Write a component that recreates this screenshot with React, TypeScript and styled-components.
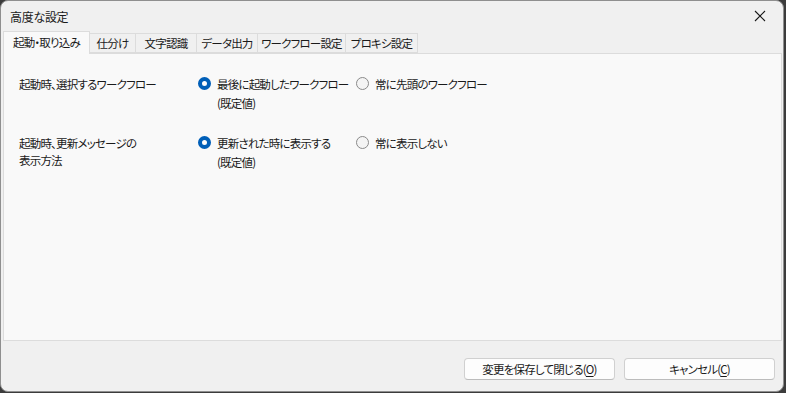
import React, { useState } from 'react';
import styled, { createGlobalStyle } from 'styled-components';

const GlobalStyle = createGlobalStyle`
  html, body {
    margin: 0;
    padding: 0;
    background: #3c3c3c;
  }
  body {
    font-family: 'Noto Sans CJK JP', 'Noto Sans', sans-serif;
    font-size: 11.5px;
    font-feature-settings: 'palt';
    letter-spacing: -0.8px;
    color: #1a1a1a;
  }
`;

// タブの幅は元の画面に合わせる
const tabs = [
  { label: '起動・取り込み', width: 86 },
  { label: '仕分け', width: 46 },
  { label: '文字認識', width: 61 },
  { label: 'データ出力', width: 61 },
  { label: 'ワークフロー設定', width: 88 },
  { label: 'プロキシ設定', width: 72 },
];

type Option = { label: string; note?: string };
type Setting = { title: string[]; options: Option[] };

const settings: Setting[] = [
  {
    title: ['起動時、選択するワークフロー'],
    options: [{ label: '最後に起動したワークフロー', note: '(既定値)' }, { label: '常に先頭のワークフロー' }],
  },
  {
    title: ['起動時、更新メッセージの', '表示方法'],
    options: [{ label: '更新された時に表示する', note: '(既定値)' }, { label: '常に表示しない' }],
  },
];

function App() {
  const [activeTab, setActiveTab] = useState(0);
  const [picked, setPicked] = useState<number[]>([0, 0]);

  const handlePick = (row: number, idx: number) => {
    // 選択したラジオの位置を保存
    const next = [...picked];
    next[row] = idx;
    setPicked(next);
  };

  return (
    <>
      <GlobalStyle />
      <S.Window>
        <S.TitleBar>
          <S.Title>高度な設定</S.Title>
          <S.CloseButton>
            <svg width='12' height='12' viewBox='0 0 12 12'>
              <path d='M1 1 L11 11 M11 1 L1 11' stroke='#1a1a1a' strokeWidth='1.1' fill='none' />
            </svg>
          </S.CloseButton>
        </S.TitleBar>
        <S.TabStrip>
          {tabs.map((t, i) => (
            <S.Tab key={t.label} $active={activeTab === i} $width={t.width} onClick={() => setActiveTab(i)}>
              {t.label}
            </S.Tab>
          ))}
        </S.TabStrip>
        <S.Panel>
          <S.SettingGrid>
            {settings.map((s, row) => (
              <React.Fragment key={row}>
                <S.SettingTitle>
                  {s.title.map((line) => (
                    <div key={line}>{line}</div>
                  ))}
                </S.SettingTitle>
                {s.options.map((o, idx) => (
                  <S.RadioOption key={o.label} onClick={() => handlePick(row, idx)}>
                    <S.RadioMark $checked={picked[row] === idx} />
                    <S.RadioText>
                      <div>{o.label}</div>
                      {o.note && <div>{o.note}</div>}
                    </S.RadioText>
                  </S.RadioOption>
                ))}
              </React.Fragment>
            ))}
          </S.SettingGrid>
        </S.Panel>
        <S.Footer>
          <S.Button>
            変更を保存して閉じる(<u>O</u>)
          </S.Button>
          <S.Button>
            キャンセル(<u>C</u>)
          </S.Button>
        </S.Footer>
      </S.Window>
    </>
  );
}

const S = {
  Window: styled.div`
    width: 784px;
    height: 392px;
    box-sizing: border-box;
    display: flex;
    flex-direction: column;
    background: #f0f0f0;
    border: 1px solid #8f8f8f;
    border-radius: 8px;
    overflow: hidden;
  `,
  TitleBar: styled.div`
    height: 30px;
    display: flex;
    align-items: center;
    justify-content: space-between;
    padding: 0 0 0 9px;
    color: #1a1a1a;
  `,
  Title: styled.span`
    font-size: 12px;
    letter-spacing: -0.3px;
  `,
  CloseButton: styled.div`
    width: 46px;
    height: 30px;
    display: flex;
    align-items: center;
    justify-content: center;
  `,
  TabStrip: styled.div`
    height: 22px;
    display: flex;
    align-items: flex-end;
    padding-left: 3px;
    position: relative;
    z-index: 1;
  `,
  Tab: styled.div<{ $active: boolean; $width: number }>`
    box-sizing: border-box;
    width: ${(p) => p.$width + 1}px;
    height: ${(p) => (p.$active ? '23px' : '20px')};
    margin-bottom: ${(p) => (p.$active ? '-1px' : '0')};
    padding: ${(p) => (p.$active ? '0 0 2px' : '0')};
    display: flex;
    align-items: center;
    justify-content: center;
    background: ${(p) => (p.$active ? '#f9f9f9' : '#f0f0f0')};
    border: 1px solid #dcdcdc;
    border-bottom: ${(p) => (p.$active ? 'none' : '1px solid #dcdcdc')};
    margin-left: -1px;
    white-space: nowrap;
    cursor: default;
  `,
  Panel: styled.div`
    flex: 1;
    margin: 0 1px 0 2px;
    background: #f9f9f9;
    border: 1px solid #dcdcdc;
    padding: 21px 15px 0;
  `,
  SettingGrid: styled.div`
    display: grid;
    grid-template-columns: 179px 158px auto;
    row-gap: 21px;
    align-items: start;
  `,
  SettingTitle: styled.div`
    line-height: 17px;
    padding-top: 1px;
  `,
  RadioOption: styled.div`
    display: flex;
    align-items: flex-start;
    gap: 6px;
    cursor: default;
  `,
  RadioMark: styled.span<{ $checked: boolean }>`
    flex: none;
    box-sizing: border-box;
    width: 13px;
    height: 13px;
    margin-top: 2px;
    border-radius: 50%;
    background: ${(p) => (p.$checked ? '#fdfdfd' : '#f4f4f4')};
    border: ${(p) => (p.$checked ? '4px solid #005fb8' : '1px solid #8a8a8a')};
  `,
  RadioText: styled.div`
    line-height: 19px;
    white-space: nowrap;
  `,
  Footer: styled.div`
    height: 50px;
    display: flex;
    justify-content: flex-end;
    align-items: flex-start;
    gap: 9px;
    padding: 17px 8px 0 0;
    box-sizing: border-box;
  `,
  Button: styled.div`
    box-sizing: border-box;
    width: 151px;
    height: 22px;
    display: flex;
    align-items: center;
    justify-content: center;
    background: #fdfdfd;
    border: 1px solid #d0d0d0;
    border-bottom-color: #bcbcbc;
    border-radius: 4px;
    color: #1a1a1a;
    u {
      text-underline-offset: 2px;
    }
  `,
};

export default App;
